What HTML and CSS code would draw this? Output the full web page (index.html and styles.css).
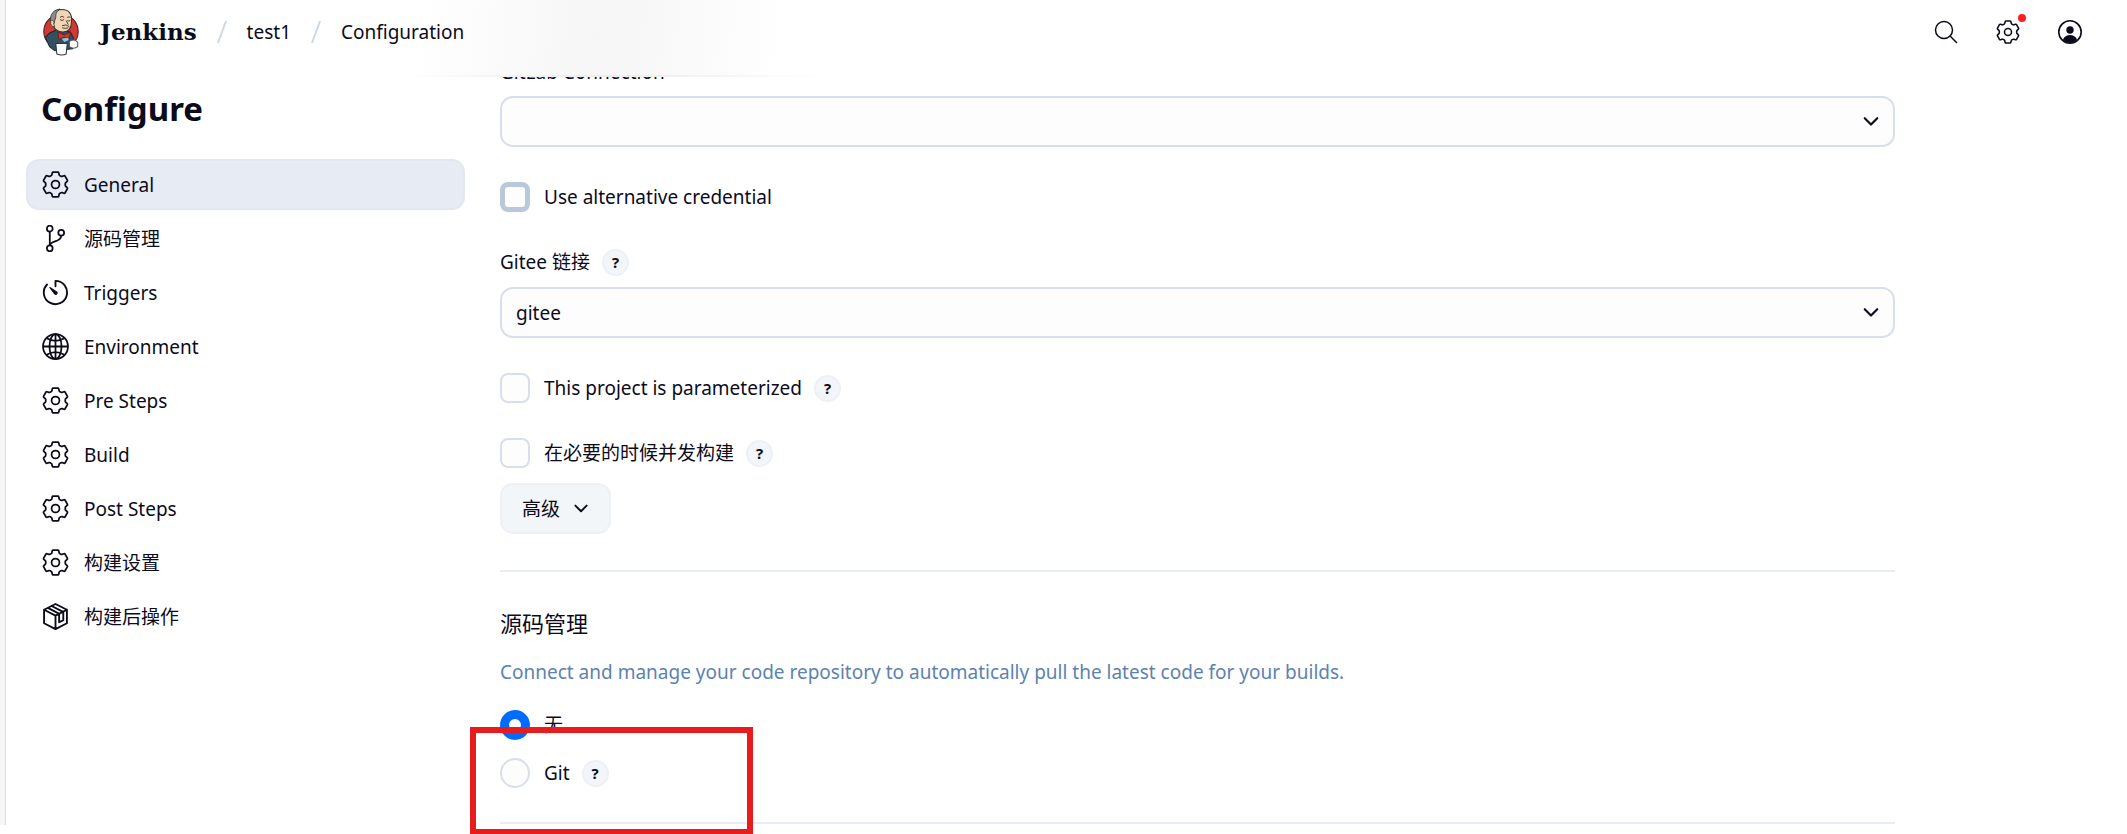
FILE: index.html
```html
<!DOCTYPE html>
<html lang="zh-CN">
<head>
<meta charset="utf-8">
<title>test1 Configuration - Jenkins</title>
<link rel="stylesheet" href="styles.css">
</head>
<body>
<svg class="defs" aria-hidden="true">
  <symbol id="gear" viewBox="10 10 492 492"><g fill="none" stroke="currentColor" stroke-width="32" stroke-linecap="round" stroke-linejoin="round"><circle cx="256" cy="256" r="72"/><path d="M213 30h86q12 0 15 12l9 38q3 12 16 17l15 8q12 5 23 2l34-10q13-4 20 8l41 71q7 12-3 21l-26 25q-9 9-9 20v28q0 11 9 20l26 25q10 9 3 21l-41 71q-7 12-20 8l-34-10q-11-3-23 2l-15 8q-13 5-16 17l-9 38q-3 12-15 12h-86q-12 0-15-12l-9-38q-3-12-16-17l-15-8q-12-5-23-2l-34 10q-13 4-20-8l-41-71q-7-12 3-21l26-25q9-9 9-20v-28q0-11-9-20l-26-25q-10-9-3-21l41-71q7-12 20-8l34 10q11 3 23-2l15-8q13-5 16-17l9-38q3-12 15-12z"/></g></symbol>
  <symbol id="chevron" viewBox="0 0 16 16"><path d="M3 5l5 5 5-5" fill="none" stroke="currentColor" stroke-width="1.700" stroke-linecap="round" stroke-linejoin="round"/></symbol>
</svg>

<div class="page">
  <header class="header">
    <nav class="crumbs" aria-label="Breadcrumb">
      <a class="brand" href="#">
        <svg class="logo" viewBox="0 0 36 46" aria-hidden="true">
          <circle cx="18" cy="22.500" r="16.500" fill="#d33833" stroke="#4a2020" stroke-width="1"/>
          <path d="M7 24l7-3 13 2 3 6-1 10-17 2-5-4-4-9z" fill="#335061" stroke="#1d2b34" stroke-width="1"/>
          <path d="M10 15C8 7 12 1.500 19 1.500s10 5 9 12c0 6-3 9.500-8 9.500-6 0-9-3-10-8z" fill="#f0d6b7" stroke="#3b3028" stroke-width="1"/>
          <path d="M9 16C6 9 9 2 17 1c-4 3-4 5-4 8l-1 3-1 4z" fill="#8d8d8b" stroke="#333" stroke-width=".8"/>
          <path d="M8 13c1-2 4-1 3 2l1 3c-3 0-4-2-4-5z" fill="#f0d6b7" stroke="#3b3028" stroke-width=".7"/>
          <path d="M17 9q2-2 4 0M24 9q2-1 3 0M17 11q2 2 4 0M24 12q1 1 3 0M23 12l2 4M19 17q4-2 7 1M19 19q3 1 6 0" fill="none" stroke="#493728" stroke-width=".9"/>
          <path d="M15 23l6 3 6-3-1 6-5-1-5 2z" fill="#d33833" stroke="#6b1614" stroke-width=".8"/>
          <path d="M18 29l7-1 1 3-5 2z" fill="#9fc1d5" stroke="#1d2b34" stroke-width=".6"/>
          <path d="M26 32q5-3 8 1v4q-4 3-8 0z" fill="#fff" stroke="#555" stroke-width="1"/>
          <path d="M13 34h11l-1 10q-4 2-9 0z" fill="#fff" stroke="#333" stroke-width="1"/>
        </svg>
        <span>Jenkins</span>
      </a>
      <svg class="slash" viewBox="0 0 12 24" aria-hidden="true"><path d="M10 1L2 23"/></svg>
      <a class="crumb" href="#">test1</a>
      <svg class="slash" viewBox="0 0 12 24" aria-hidden="true"><path d="M10 1L2 23"/></svg>
      <a class="crumb" href="#">Configuration</a>
    </nav>
    <div class="actions">
      <button class="action" aria-label="Search"><svg viewBox="0 0 24 24" fill="none" stroke="currentColor" stroke-width="1.500" stroke-linecap="round"><circle cx="10" cy="10" r="8.500"/><path d="M16.300 16.300L22.500 22.500"/></svg></button>
      <button class="action" aria-label="Manage Jenkins"><svg><use href="#gear"/></svg><i class="dot"></i></button>
      <button class="action" aria-label="User"><svg viewBox="0 0 24 24"><circle cx="12" cy="12" r="11.200" fill="none" stroke="currentColor" stroke-width="1.600"/><circle cx="12" cy="10" r="3.700" fill="currentColor"/><path d="M5 19.500c1-3 4-4.500 7-4.500s6 1.500 7 4.500c-2 2.500-4.500 3.500-7 3.500s-5-1-7-3.500z" fill="currentColor"/></svg></button>
    </div>
  </header>

  <div class="body">
    <aside class="sidebar">
      <h1 class="title">Configure</h1>
      <nav class="tasks" aria-label="Sections">
        <a class="task active" href="#general"><svg><use href="#gear"/></svg>General</a>
        <a class="task" href="#scm"><svg viewBox="0 0 26 26" fill="none" stroke="currentColor" stroke-width="1.700"><circle cx="7.500" cy="3.500" r="2.800"/><circle cx="7.500" cy="22.500" r="2.800"/><circle cx="18.500" cy="7.500" r="2.800"/><path d="M7.500 6.300v13.400M18.500 10.300c0 6.500-10.500 4.500-11 9.400"/></svg>源码管理</a>
        <a class="task" href="#triggers"><svg viewBox="0 0 26 26" fill="none" stroke="currentColor" stroke-width="1.800" stroke-linecap="round" stroke-linejoin="round"><path d="M13 7V1.800A11.200 11.200 0 1 1 4.800 5.300"/><path d="M7.500 8.200l6.700 4.200a1.400 1.400 0 0 1-2 2z" fill="currentColor" stroke-width="1"/></svg>Triggers</a>
        <a class="task" href="#environment"><svg viewBox="0 0 26 26" fill="none" stroke="currentColor" stroke-width="1.700"><circle cx="13" cy="13" r="12"/><ellipse cx="13" cy="13" rx="5.800" ry="12"/><path d="M13 1v24M1 13h24M4.500 5q8.500 5 17 0M4.500 21q8.500-5 17 0"/></svg>Environment</a>
        <a class="task" href="#pre"><svg><use href="#gear"/></svg>Pre Steps</a>
        <a class="task" href="#build"><svg><use href="#gear"/></svg>Build</a>
        <a class="task" href="#post"><svg><use href="#gear"/></svg>Post Steps</a>
        <a class="task" href="#settings"><svg><use href="#gear"/></svg>构建设置</a>
        <a class="task" href="#after"><svg viewBox="0 0 26 26" fill="none" stroke="currentColor" stroke-width="1.800" stroke-linejoin="round" stroke-linecap="round"><path d="M13 1l11 5.500v13L13 25.200 2 19.500v-13zM2 6.500l11 5.700 11-5.700M13 12.200v13M5.700 4.700l11 5.700M9.300 2.900l11 5.700M16.500 10.500v8l4-2v-8"/></svg>构建后操作</a>
      </nav>
    </aside>

    <main class="main">
      <label class="label" for="gitlab">GitLab Connection</label>
      <div class="select"><select id="gitlab"><option></option></select><svg><use href="#chevron"/></svg></div>

      <div class="row spaced"><input class="check focused" type="checkbox" id="alt"><label for="alt">Use alternative credential</label></div>

      <div class="row heading"><label for="gitee">Gitee 链接</label><button class="help" aria-label="Help">?</button></div>
      <div class="select"><select id="gitee"><option>gitee</option></select><svg><use href="#chevron"/></svg></div>

      <div class="row spaced"><input class="check" type="checkbox" id="param"><label for="param">This project is parameterized</label><button class="help" aria-label="Help">?</button></div>
      <div class="row spaced"><input class="check" type="checkbox" id="concurrent"><label for="concurrent">在必要的时候并发构建</label><button class="help" aria-label="Help">?</button></div>
      <button class="advanced">高级<svg><use href="#chevron"/></svg></button>

      <section class="section" id="scm">
        <h2 class="subtitle">源码管理</h2>
        <p class="desc">Connect and manage your code repository to automatically pull the latest code for your builds.</p>
        <div class="row"><input class="check radio" type="radio" name="scm" id="none" checked><label for="none">无</label></div>
        <div class="row git"><input class="check radio" type="radio" name="scm" id="git"><label for="git">Git</label><button class="help" aria-label="Help">?</button>
          <span class="marker"></span></div>
      </section>
      <hr class="rule">
    </main>
  </div>
</div>
</body>
</html>
```
FILE: styles.css
```css
* { box-sizing: border-box; }

body {
  margin: 0;
  background: #fff;
  color: #0b0b1c;
  font: 19px/30px "Noto Sans", "Noto Sans CJK SC", sans-serif;
}

a { color: inherit; text-decoration: none; }
button, select { font: inherit; color: inherit; }
.defs { position: absolute; width: 0; height: 0; }

.page {
  height: 100vh;
  overflow: hidden;
  background: linear-gradient(#f6f6f6, #f6f6f6) 0 0 / 5px calc(100% - 9px) no-repeat,
              linear-gradient(#dedede, #dedede) 5px 0 / 1px calc(100% - 9px) no-repeat;
}

.header {
  display: flex;
  align-items: flex-start;
  justify-content: space-between;
  height: 77px;
  margin-left: 6px;
  padding: 8px 41px 0 36px;
  background: linear-gradient(90deg, transparent 400px, #ededed 600px, transparent 820px) 0 100% / 100% 2px no-repeat,
              linear-gradient(96deg, transparent 410px, #f6f6f6 590px, #f8f8f8 650px, transparent 780px);
}

.crumbs { display: flex; align-items: center; height: 48px; }
.brand {
  display: flex;
  align-items: center;
  gap: 20px;
  font-family: "DejaVu Serif", serif;
  font-size: 23px;
  font-weight: bold;
}
.logo { width: 38px; height: 48px; }
.slash { width: 12px; height: 24px; margin: 0 19px; fill: none; stroke: #ccd8e6; stroke-width: 2; }

.actions { display: flex; align-items: center; height: 48px; gap: 30px; }
.action {
  position: relative;
  display: grid;
  place-items: center;
  width: 32px;
  height: 32px;
  padding: 0;
  border: 0;
  background: none;
}
.action svg { width: 24px; height: 24px; }
.dot { position: absolute; top: -2px; right: -2px; width: 8px; height: 8px; border-radius: 50%; background: #fc2020; }

.body { display: flex; gap: 35px; padding: 0 20px 0 26px; height: calc(100vh - 77px); }

.sidebar { width: 439px; flex-shrink: 0; padding-top: 8px; }
.title { margin: 0 0 26px; padding-left: 15px; font-size: 33px; line-height: 48px; font-weight: 700; }
.tasks { display: flex; flex-direction: column; gap: 3px; }
.task {
  display: flex;
  align-items: center;
  gap: 15px;
  height: 51px;
  padding-left: 14px;
  border: 2px solid transparent;
  border-radius: 13px;
}
.task svg { width: 27px; height: 27px; }
.active { background: #e7ebf4; border-color: #e3e7ee; }

.main { flex: 1; max-width: 1395px; }
.label { display: block; margin: -20px 0 9px; line-height: 30px; clip-path: inset(20px 0 0); }

.select { display: grid; align-items: center; }
.select > * { grid-area: 1 / 1; }
.select select {
  width: 100%;
  height: 51px;
  padding: 0 14px;
  border: 2px solid #d8deeb;
  border-radius: 13px;
  background: #fdfdfd;
  appearance: none;
}
.select svg { width: 20px; height: 20px; margin-right: 14px; justify-self: end; pointer-events: none; }

.row { display: flex; align-items: center; height: 30px; }
.spaced { margin: 35px 0; }
.heading { margin: 34px 0 10px; }

.check {
  appearance: none;
  flex-shrink: 0;
  width: 30px;
  height: 30px;
  margin: 0 14px 0 0;
  border: 2px solid #d8deeb;
  border-radius: 8px;
  background: #fdfdfd;
}
.focused { border: 5px solid #bac8de; }
.radio { border-radius: 50%; }
.radio:checked { border: 9px solid #006bff; background: #fff; }

.help {
  width: 27px;
  height: 27px;
  margin-left: 12px;
  padding: 0;
  border: 2px solid #edf0f4;
  border-radius: 50%;
  background: #f2f5f9;
  font-size: 15px;
  line-height: 22px;
  font-weight: 700;
}

.advanced {
  display: flex;
  align-items: center;
  gap: 12px;
  height: 51px;
  margin-top: -20px;
  padding: 0 19px 0 20px;
  border: 2px solid #edf1f5;
  border-radius: 13px;
  background: #f2f6f9;
}
.advanced svg { width: 18px; height: 18px; }

.section { margin-top: 36px; padding-top: 35px; border-top: 2px solid #e8ecf3; }
.subtitle { margin: 0; font-size: 22px; line-height: 32px; font-weight: 400; }
.desc { margin: 18px 0 23px; color: #5c82b2; }

.git { position: relative; margin-top: 18px; }
.marker {
  position: absolute;
  top: -31px;
  left: -30px;
  width: 283px;
  height: 108px;
  border: 6px solid #e81c1c;
  pointer-events: none;
}
.rule { margin: 34px 0 0; border: 0; border-top: 2px solid #e8ecf3; }
```
